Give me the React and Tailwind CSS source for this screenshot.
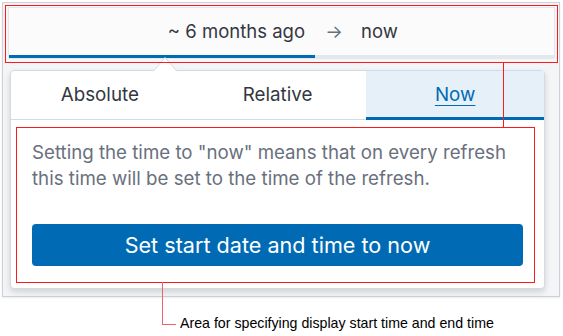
import React from 'react';

const tabs = [
  { label: 'Absolute', active: false },
  { label: 'Relative', active: false },
  { label: 'Now', active: true },
];

const App = () => {
  return (
    <div className="relative w-[563px] h-[336px] overflow-hidden bg-white font-['Inter',sans-serif]">
      {/* date picker frame */}
      <div className="ml-[2px] mt-[2px] w-[558px] h-[295px] border border-[#cdd0d4] bg-[#f4f5f7] shadow-[0_1px_2px_rgba(0,0,0,0.08)]">
        <div className="ml-[5px] mr-[4px] mt-[4px] h-[52px] flex flex-col bg-[#fbfbfc] border border-[#e4e7ec]">
          <div className="flex flex-1 items-center text-[18.5px] text-[#343741]">
            <div className="w-[306px] pr-[10px] text-right">~ 6 months ago</div>
            <div className="w-[38px] text-center text-[#69707d]">→</div>
            <div className="pl-[8px]">now</div>
          </div>
          <div className="flex h-[3px]">
            <div className="w-[306px] bg-[#006bb4]" />
            <div className="flex-1 bg-[#e3e7ee]" />
          </div>
        </div>

        {/* popover */}
        <div className="relative ml-[7px] mt-[11px] w-[535px] h-[219px] flex flex-col bg-white border border-[#d3dae6] rounded-[4px] shadow-[0_3px_6px_rgba(0,0,0,0.15)]">
          <svg className="absolute left-[142px] top-[-15px]" width="24" height="16" viewBox="0 0 24 16">
            <path d="M0 15.5 L12 1.5 L24 15.5" fill="#ffffff" stroke="#d3dae6" strokeWidth="1" />
          </svg>
          <div className="flex h-[49px] border-b border-[#d3dae6]">
            {tabs.map((tab) => (
              <div
                key={tab.label}
                className={
                  tab.active
                    ? 'flex-1 flex items-center justify-center bg-[#e6f0f8] border-b-[3px] border-[#006bb4] mb-[-1px] pt-[2px] text-[18.8px] text-[#006bb4] underline underline-offset-[4px]'
                    : 'flex-1 flex items-center justify-center text-[18.8px] text-[#343741]'
                }
              >
                {tab.label}
              </div>
            ))}
          </div>
          <div className="flex flex-col px-[21px] pt-[20px]">
            <p className="text-[18.7px] leading-[26px] text-[#69707d]">
              Setting the time to "now" means that on every refresh this time will be set to the time of the
              refresh.
            </p>
            <button className="mt-[32px] h-[42px] w-full rounded-[4px] bg-[#006bb4] text-[21.6px] text-white">
              Set start date and time to now
            </button>
          </div>
        </div>
      </div>

      <div className="mt-[19px] ml-[180px] text-[14.2px] leading-[15px] text-black font-['Liberation_Sans',Arial,sans-serif]">
        Area for specifying display start time and end time
      </div>

      {/* annotation overlays */}
      <div className="absolute left-[5px] top-[5px] w-[553px] h-[58px] border border-[#ff1a1a]" />
      <div className="absolute left-[16px] top-[127px] w-[519px] h-[156px] border border-[#ff1a1a]" />
      <div className="absolute left-[503px] top-[62px] w-px h-[66px] bg-[#ff1a1a]" />
      <div className="absolute left-[162px] top-[282px] w-[14px] h-[43px] border-l border-b border-[#f2606d]" />
    </div>
  );
};

export default App;
